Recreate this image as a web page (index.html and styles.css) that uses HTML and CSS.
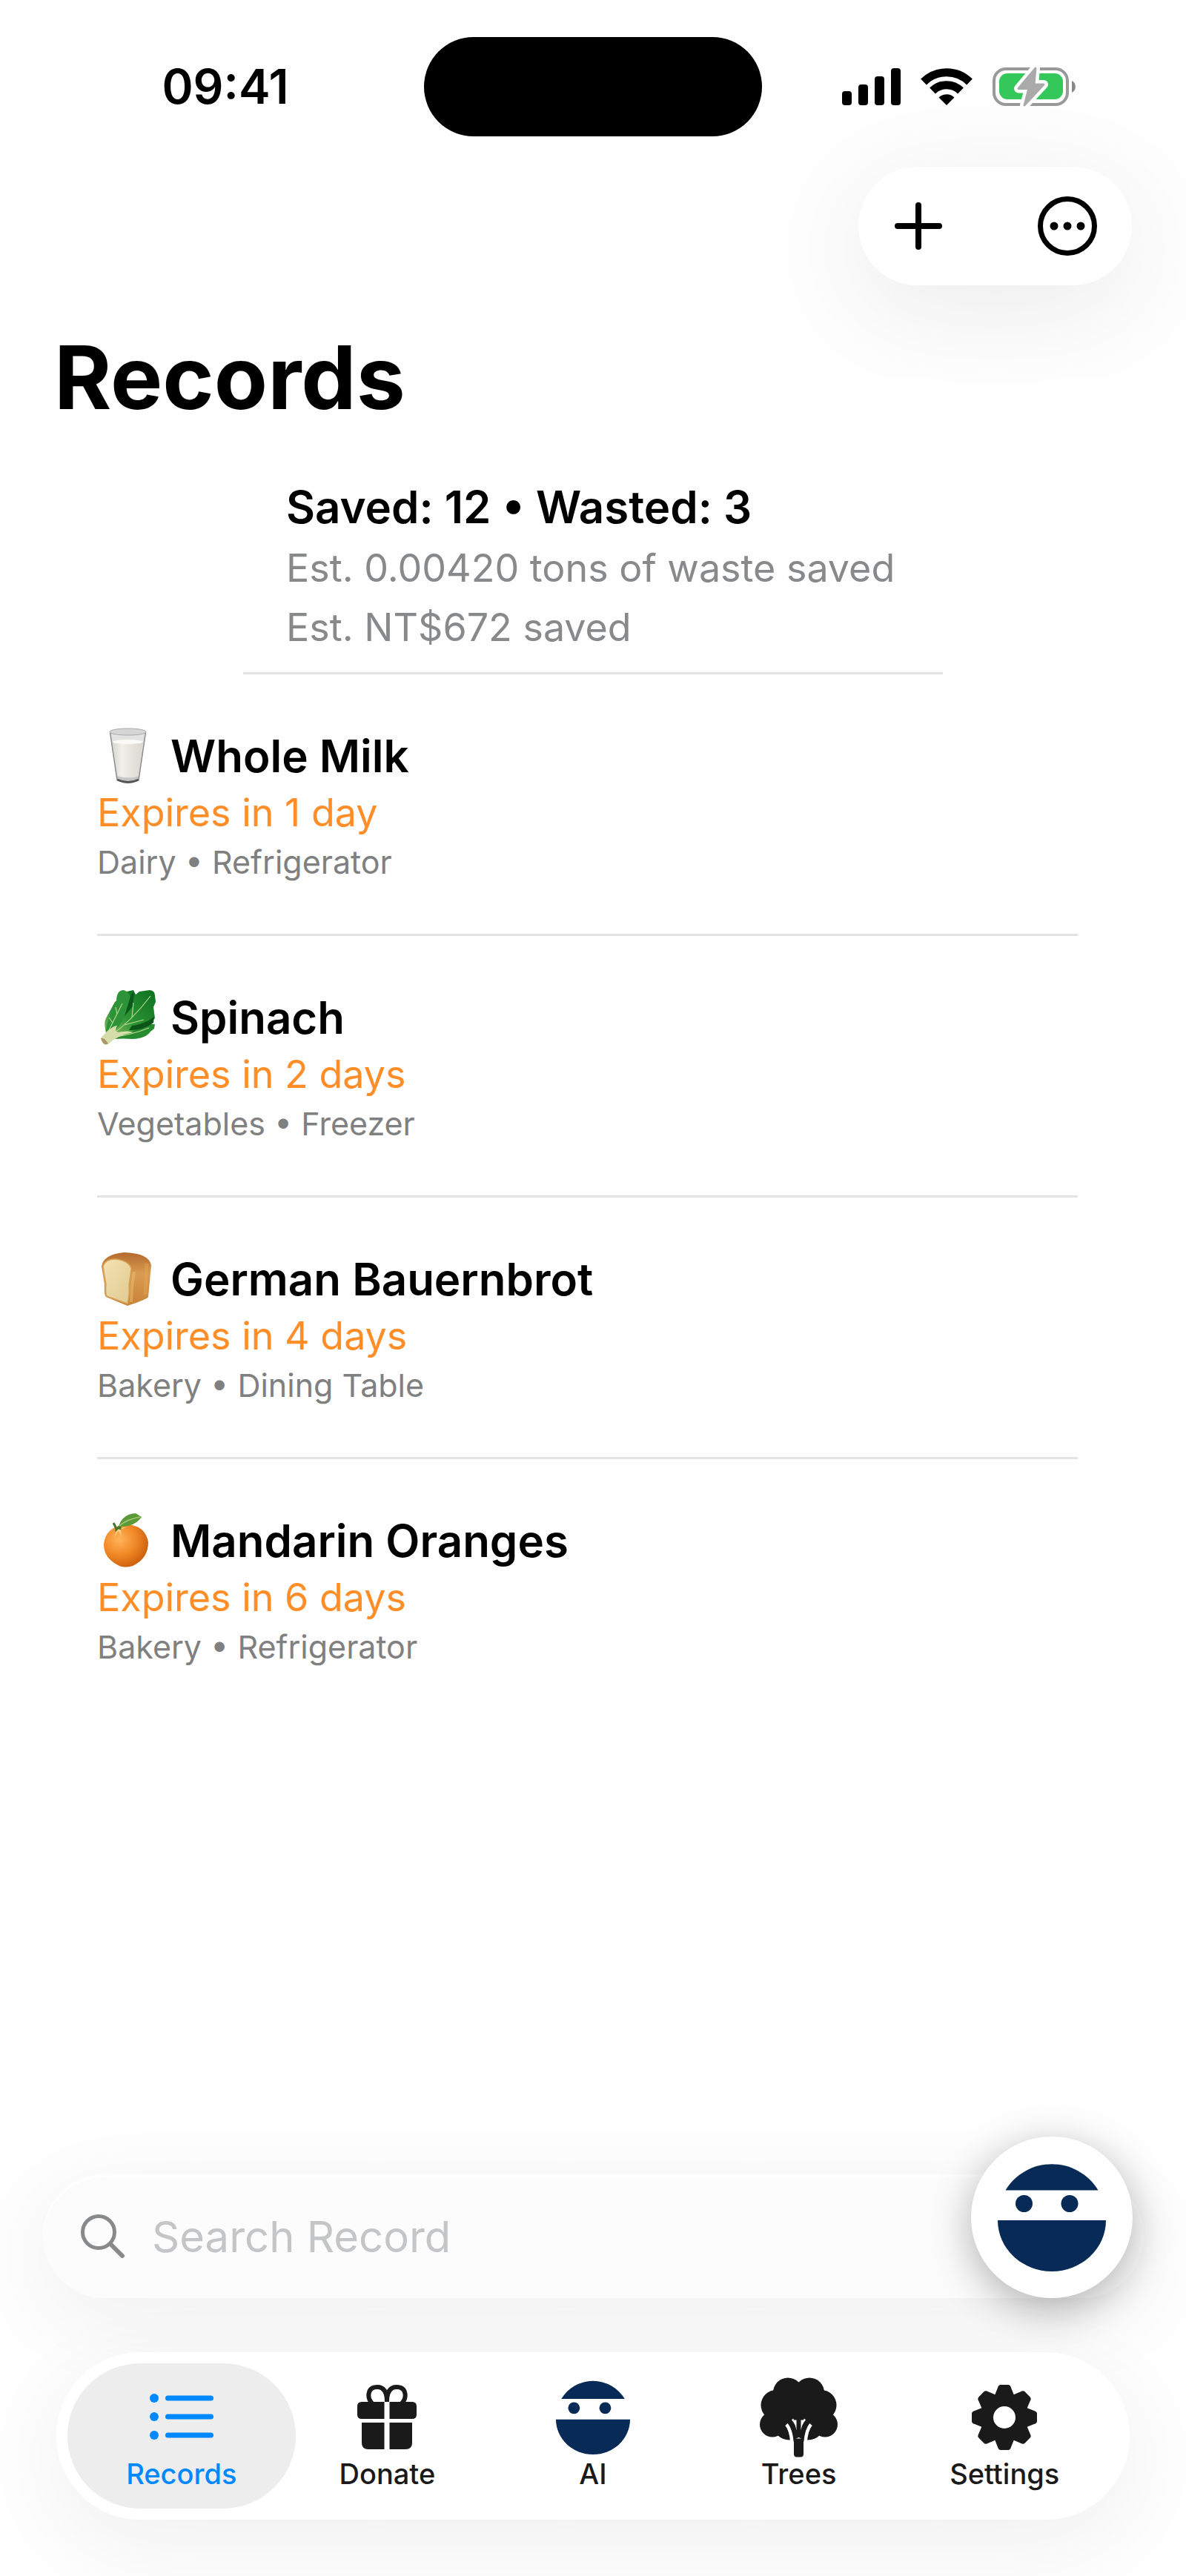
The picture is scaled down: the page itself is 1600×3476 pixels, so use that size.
FILE: index.html
```html
<!DOCTYPE html>
<html lang="en">

<head>
    <meta charset="UTF-8">
    <meta name="viewport" content="width=device-width, initial-scale=1.0">
    <title>Records</title>
    <link rel="stylesheet" href="styles.css">
</head>

<body>
    <!-- Ninja face, used by the AI tab and the floating button -->
    <svg width="0" height="0" class="defs" aria-hidden="true">
        <symbol id="ninja" viewBox="0 0 146 146">
            <path d="M10.500 36.500A73 73 0 0 1 135.500 36.500Z" />
            <path d="M0 77A73 69 0 0 0 146 77Z" />
            <circle cx="35.500" cy="54.500" r="11.500" />
            <circle cx="97" cy="54.500" r="11.500" />
        </symbol>
    </svg>

    <div class="app">
        <div class="status-bar">
            <span class="time">09:41</span>
            <div class="island"></div>
            <div class="indicators">
                <svg width="79" height="50" viewBox="0 0 79 50">
                    <rect x="0" y="31" width="13" height="19" rx="4" />
                    <rect x="22" y="22" width="13" height="28" rx="4" />
                    <rect x="44" y="11" width="13" height="39" rx="4" />
                    <rect x="66" y="0" width="13" height="50" rx="4" />
                </svg>
                <svg width="70" height="50" viewBox="0 0 70 50">
                    <g fill="none" stroke="#000" stroke-width="11">
                        <path d="M4 18.500A44 44 0 0 1 66 18.500" />
                        <path d="M16 30.500A27 27 0 0 1 54 30.500" />
                    </g>
                    <path d="M35 50L24.500 39.500A15 15 0 0 1 45.500 39.500Z" />
                </svg>
                <svg width="113" height="54" viewBox="0 0 113 54">
                    <rect x="2" y="3" width="99" height="48" rx="16" fill="none" stroke="#999" stroke-width="4" />
                    <path d="M107 19A9 9 0 0 1 107 35Z" fill="#888" />
                    <rect x="9" y="9" width="86" height="35" rx="11" fill="#34c759" />
                    <path d="M58 2L35 29.500H49L43 52L69 24H56Z" fill="#fff" stroke="#fff" stroke-width="12" stroke-linejoin="round" />
                    <path d="M58 2L35 29.500H49L43 52L69 24H56Z" fill="#aaa" stroke="#aaa" stroke-width="3" stroke-linejoin="round" />
                </svg>
            </div>
        </div>

        <div class="toolbar">
            <div class="toolbar-pill">
                <button type="button" aria-label="Add record">
                    <svg width="80" height="80" viewBox="0 0 80 80" fill="none" stroke="#000" stroke-width="8" stroke-linecap="round">
                        <path d="M40 12V68M12 40H68" />
                    </svg>
                </button>
                <button type="button" aria-label="More">
                    <svg width="80" height="80" viewBox="0 0 80 80">
                        <circle cx="40" cy="40" r="36.500" fill="none" stroke="#000" stroke-width="7" />
                        <circle cx="22" cy="40" r="5.500" />
                        <circle cx="40" cy="40" r="5.500" />
                        <circle cx="58" cy="40" r="5.500" />
                    </svg>
                </button>
            </div>
        </div>

        <main>
            <h1>Records</h1>

            <section class="summary">
                <h2>Saved: 12 • Wasted: 3</h2>
                <p>Est. 0.00420 tons of waste saved</p>
                <p>Est. NT$672 saved</p>
            </section>

            <ul class="records">
                <li>
                    <h3>
                        <svg class="food" viewBox="0 0 82 82">
                            <defs>
                                <linearGradient id="milk" x1="0" x2="1" y1="0" y2="0">
                                    <stop offset="0" stop-color="#d6d5cf" />
                                    <stop offset=".3" stop-color="#f1f0ea" />
                                    <stop offset="1" stop-color="#d9d7ce" />
                                </linearGradient>
                            </defs>
                            <path d="M17 8L26 74Q42 80 57 74L66 8Z" fill="#e2e2e2" />
                            <path d="M21 22L28 68Q42 72 55 68L62 22Z" fill="url(#milk)" />
                            <ellipse cx="41.500" cy="22" rx="20.500" ry="3" fill="#fafaf7" />
                            <path d="M26 68Q42 73 57 68L56 74Q42 80 27 74Z" fill="#c4c4c4" />
                            <path d="M27 73Q42 80 56 73" fill="none" stroke="#555" stroke-width="3" />
                            <path d="M17.500 9L27 73M65.500 9L56 73" fill="none" stroke="#8c8c8c" stroke-width="1.500" />
                            <ellipse cx="41.500" cy="8.500" rx="24.500" ry="4.500" fill="#d5d5d5" stroke="#aaa" />
                        </svg>
                        Whole Milk
                    </h3>
                    <p class="expires">Expires in 1 day</p>
                    <p class="place">Dairy • Refrigerator</p>
                </li>
                <li>
                    <h3>
                        <svg class="food" viewBox="0 0 82 82">
                            <defs>
                                <linearGradient id="leaf" x1="0" x2="1" y1="1" y2="0">
                                    <stop offset="0" stop-color="#8fc063" />
                                    <stop offset=".4" stop-color="#2c9434" />
                                    <stop offset="1" stop-color="#0d7020" />
                                </linearGradient>
                            </defs>
                            <path d="M15 62L36 49L78 50L77 56L72 60Q66 69 48 70Q36 69 22 70Z" fill="#278b30" />
                            <path d="M13 65Q8 49 12 42L24 20L40 6L49 4L52 10L50 30L17 70Z" fill="url(#leaf)" />
                            <path d="M16 68Q31 48 35 35L51 11L57 6L71 4Q78 5 78 11L79 20L76 27L78 42Q65 57 47 59Q29 61 16 68Z" fill="url(#leaf)" />
                            <path d="M26 19Q26 4 36 4Q48 8 44 24Q38 46 17 66L12 61Q11 50 26 19Z" fill="#2c9338" />
                            <path d="M47 52Q64 50 77 40L76 48Q62 59 43 58Z" fill="#0b5519" />
                            <path d="M46 9L50 7L48 26L37 39Z" fill="#0a5b1b" />
                            <path d="M13 64L34 22M18 66Q48 44 72 12M20 68Q48 64 70 55M37 51L63 44M47 41L49 21M27 37L25 27M21 48L16 41" fill="none" stroke="#b4d68a" stroke-width="1.200" />
                            <path d="M5 69L14 59Q24 51 27 52Q23 59 28 61Q42 58 49 61Q27 65 15 77Q8 79 5 69Z" fill="#d5deaa" />
                            <path d="M5 69Q9 67 15 76Q9 81 5 69Z" fill="#ab956a" />
                        </svg>
                        Spinach
                    </h3>
                    <p class="expires">Expires in 2 days</p>
                    <p class="place">Vegetables • Freezer</p>
                </li>
                <li>
                    <h3>
                        <svg class="food" viewBox="0 0 82 82">
                            <defs>
                                <linearGradient id="crust" x1="0" x2="0" y1="0" y2="1">
                                    <stop offset="0" stop-color="#b46a2c" />
                                    <stop offset=".4" stop-color="#d99b52" />
                                    <stop offset="1" stop-color="#c88338" />
                                </linearGradient>
                                <linearGradient id="crumb" x1="0" x2="1" y1="0" y2="1">
                                    <stop offset="0" stop-color="#f4e2b2" />
                                    <stop offset="1" stop-color="#e0ca91" />
                                </linearGradient>
                            </defs>
                            <path d="M6 24Q8 8 36 5Q70 6 73 22L69 65Q68 68 41 77L12 65Q9 62 10 48Z" fill="url(#crust)" />
                            <path d="M8 24Q11 14 25 14Q44 17 46 27L43 49Q44 60 41 74L13 64Q11 60 12 48Z" fill="url(#crumb)" stroke="#d8a65a" stroke-width="1.500" />
                            <path d="M50 31L47 51L46 72" fill="none" stroke="#eebf72" stroke-width="4" opacity=".5" />
                            <path d="M67 20L65 62" fill="none" stroke="#e3a654" stroke-width="5" opacity=".5" />
                        </svg>
                        German Bauernbrot
                    </h3>
                    <p class="expires">Expires in 4 days</p>
                    <p class="place">Bakery • Dining Table</p>
                </li>
                <li>
                    <h3>
                        <svg class="food" viewBox="0 0 82 82">
                            <defs>
                                <radialGradient id="peel" cx=".35" cy=".35" r=".75">
                                    <stop offset="0" stop-color="#ffb45c" />
                                    <stop offset=".5" stop-color="#f18826" />
                                    <stop offset="1" stop-color="#c45808" />
                                </radialGradient>
                            </defs>
                            <path d="M39 19Q65 20 69 43Q69 65 48 75Q38 78 30 75Q9 65 9 46Q11 22 39 19Z" fill="url(#peel)" />
                            <path d="M27 25L23 36L29 28L33 36L32 26L41 22Z" fill="#ffce7c" />
                            <path d="M22 17Q26 24 26 26L31 21L31 26" fill="none" stroke="#42752b" stroke-width="3" />
                            <path d="M29 22Q34 5 52 4L60 9Q50 23 29 22Z" fill="#5c9a39" />
                            <path d="M30 21Q40 12 58 9" fill="none" stroke="#a6cc79" stroke-width="1.500" />
                        </svg>
                        Mandarin Oranges
                    </h3>
                    <p class="expires">Expires in 6 days</p>
                    <p class="place">Bakery • Refrigerator</p>
                </li>
            </ul>
        </main>

        <div class="dock">
            <div class="search-wrap">
                <label class="search">
                    <svg width="60" height="60" viewBox="0 0 60 60" fill="none" stroke="#88898b" stroke-linecap="round">
                        <circle cx="24" cy="24" r="21.500" stroke-width="5" />
                        <path d="M40 40L56 56" stroke-width="6" />
                    </svg>
                    <input type="search" placeholder="Search Record" aria-label="Search Record">
                </label>
                <button type="button" class="fab" aria-label="Ask AI">
                    <svg width="146" height="146"><use href="#ninja" /></svg>
                </button>
            </div>

            <nav class="tabs">
                <a href="#" class="tab active">
                    <svg width="86" height="100" viewBox="0 0 86 100">
                        <circle cx="6" cy="24" r="6" />
                        <circle cx="6" cy="49" r="6" />
                        <circle cx="6" cy="74" r="6" />
                        <rect x="21" y="20.500" width="65" height="7" rx="3.500" />
                        <rect x="21" y="45.500" width="65" height="7" rx="3.500" />
                        <rect x="21" y="70.500" width="65" height="7" rx="3.500" />
                    </svg>
                    Records
                </a>
                <a href="#" class="tab">
                    <svg width="80" height="100" viewBox="0 -6 80 100">
                        <path d="M36.500 23H6Q0 23 0 29V40Q0 46 6 46H36.500ZM43.500 23H74Q80 23 80 29V40Q80 46 74 46H43.500Z" />
                        <path d="M36.500 51H6V78Q6 87 15 87H36.500ZM43.500 51H74V78Q74 87 65 87H43.500Z" />
                        <path d="M20 25C13 18 13 3 27 3C36 3 40 10 40 23C40 10 44 3 53 3C67 3 67 18 60 25" fill="none" stroke="#1a1a1a" stroke-width="6" />
                    </svg>
                    Donate
                </a>
                <a href="#" class="tab">
                    <svg class="ninja-icon" width="100" height="100"><use href="#ninja" /></svg>
                    AI
                </a>
                <a href="#" class="tab">
                    <svg width="106" height="107" viewBox="0 0 106 107">
                        <circle cx="38" cy="20" r="20" />
                        <circle cx="67" cy="20" r="20" />
                        <circle cx="22" cy="37" r="20.500" />
                        <circle cx="83" cy="37" r="20.500" />
                        <circle cx="17" cy="63" r="17" />
                        <circle cx="88" cy="63" r="17" />
                        <circle cx="40" cy="61" r="23" />
                        <circle cx="65" cy="61" r="23" />
                        <rect x="18" y="18" width="69" height="50" />
                        <path d="M43 82L46 87V103Q46 107 50 107H55Q59 107 59 103V87L62 82Z" />
                        <path d="M36 63Q42 70 43.500 87M69 63Q63 70 61.500 87" fill="none" stroke="#fff" stroke-width="4.500" />
                        <path d="M43 57L45 55L46 57H49.500V71Q48 62 43 57ZM62 57L60 55L59 57H55.500V71Q57 62 62 57Z" fill="#fff" />
                    </svg>
                    Trees
                </a>
                <a href="#" class="tab">
                    <svg width="88" height="100" viewBox="-44 -50 88 100">
                        <circle r="24" fill="none" stroke="#1a1a1a" stroke-width="18" />
                        <g id="teeth">
                            <path id="tooth" d="M-13 -30L-9 -40Q-8 -44 -5 -44H5Q8 -44 9 -40L13 -30ZM-13 30L-9 40Q-8 44 -5 44H5Q8 44 9 40L13 30Z" />
                            <use href="#tooth" transform="rotate(90)" />
                        </g>
                        <use href="#teeth" transform="rotate(45)" />
                    </svg>
                    Settings
                </a>
            </nav>
        </div>
    </div>
</body>

</html>
```
FILE: styles.css
```css
* {
    box-sizing: border-box;
}

body {
    margin: 0;
    background-color: #fefefe;
    color: #000;
    font-family: Inter, "Liberation Sans", sans-serif;
}

h1,
h2,
h3,
p,
ul {
    margin: 0;
    padding: 0;
}

button {
    border: none;
    padding: 0;
    background: none;
    cursor: pointer;
}

svg {
    display: block;
    flex: none;
}

.defs {
    position: absolute;
}

.app {
    display: flex;
    flex-direction: column;
    min-height: 100vh;
    overflow: hidden;
}

/* Status bar */
.status-bar {
    display: grid;
    grid-template-columns: 1fr 456px 1fr;
    align-items: center;
    padding: 50px 0 41px;
}

.time {
    padding-left: 36px;
    font-size: 64px;
    font-weight: 600;
    line-height: 72px;
    text-align: center;
}

.island {
    height: 134px;
    border-radius: 67px;
    background-color: #000;
}

.indicators {
    display: flex;
    align-items: center;
    justify-content: flex-end;
    gap: 27px;
    padding-right: 148px;
}

/* Toolbar */
.toolbar {
    display: flex;
    justify-content: flex-end;
    padding: 0 73px;
}

.toolbar-pill {
    display: flex;
    align-items: center;
    justify-content: space-between;
    width: 369px;
    height: 160px;
    padding: 0 47px 0 41px;
    border-radius: 80px;
    background-color: #fff;
    box-shadow: 0 30px 140px rgba(0, 0, 0, 0.08);
}

h1 {
    margin-top: 54px;
    padding: 0 73px;
    font-size: 118px;
    font-weight: 700;
    line-height: 140px;
}

/* Summary */
.summary {
    width: 59%;
    margin: 62px auto 0;
    padding: 0 0 20px 58px;
    border-bottom: 3px solid #e4e4e4;
}

.summary h2 {
    font-size: 60px;
    font-weight: 600;
    line-height: 86px;
}

.summary p {
    color: #88898b;
    font-size: 52px;
    line-height: 80px;
}

/* Records list */
.records {
    margin: 0 146px 0 131px;
    list-style: none;
}

.records li {
    padding: 69px 0 67px;
    border-bottom: 3px solid #e4e4e4;
}

.records li:last-child {
    border-bottom: none;
}

.records h3 {
    display: flex;
    align-items: center;
    gap: 17px;
    font-size: 60px;
    font-weight: 600;
    line-height: 82px;
}

.food {
    width: 82px;
    height: 82px;
}

.expires {
    color: #ff8d28;
    font-size: 52px;
    line-height: 72px;
}

.place {
    color: #808080;
    font-size: 43px;
    line-height: 60px;
}

/* Search and tab bar */
.dock {
    margin-top: auto;
    padding-bottom: 76px;
}

.search-wrap {
    position: relative;
    margin: 0 57px 73px 58px;
}

.search {
    display: flex;
    align-items: center;
    gap: 36px;
    height: 167px;
    padding: 0 240px 0 51px;
    border-radius: 84px;
    background-color: #fcfcfc;
    box-shadow: 0 30px 120px rgba(0, 0, 0, 0.06), inset 0 4px 2px #fff;
}

.search input {
    flex: 1;
    min-width: 0;
    padding: 0;
    border: none;
    outline: none;
    background: none;
    font-family: inherit;
    font-size: 58px;
}

.search input::placeholder {
    color: #c4c5c7;
}

.fab {
    position: absolute;
    right: 15px;
    bottom: 0;
    display: flex;
    align-items: center;
    justify-content: center;
    width: 218px;
    height: 218px;
    border-radius: 50%;
    background-color: #fefefe;
    box-shadow: 0 14px 56px rgba(0, 0, 0, 0.3);
    fill: #072a56;
}

.tabs {
    position: relative;
    display: grid;
    grid-template-columns: repeat(5, 1fr);
    margin: 0 76px;
    padding: 15px 30px;
    border-radius: 113px;
    background-color: #fff;
    box-shadow: 0 30px 120px rgba(0, 0, 0, 0.06);
}

.tab {
    display: flex;
    flex-direction: column;
    align-items: center;
    height: 196px;
    padding-top: 19px;
    color: #1a1a1a;
    fill: currentColor;
    font-size: 38px;
    font-weight: 500;
    line-height: 44px;
    text-decoration: none;
}

.tab svg {
    height: 108px;
}

.tab.active {
    margin: 0 -15px;
    border-radius: 98px;
    background-color: #ededed;
    color: #0088ff;
}

.ninja-icon {
    fill: #072a56;
}
```
